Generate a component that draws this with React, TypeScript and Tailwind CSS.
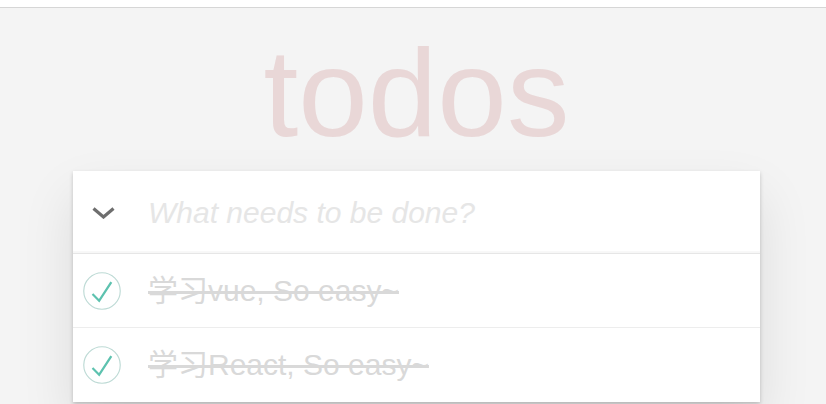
const todos = [
  { id: 1, title: "学习vue, So easy~", done: true },
  { id: 2, title: "学习React, So easy~", done: true },
];

const font = { fontFamily: '"Liberation Sans", "Noto Sans CJK SC", sans-serif' };

function CheckIcon() {
  return (
    <svg width="38" height="38" viewBox="0 0 100 100">
      <circle cx="50" cy="50" r="48" fill="none" stroke="#bddad5" strokeWidth="3" />
      <path d="M72 25L42 71 27 56l-4 4 20 20 34-52z" fill="#5dc2af" />
    </svg>
  );
}

export default function App() {
  return (
    <div className="min-h-[404px] bg-[#f4f4f4]" style={font}>
      <div className="h-[8px] bg-white border-b border-[#d6d6d6]" />
      <div className="ml-[73px] w-[687px]">
        <h1 className="mt-[22px] mb-[16px] text-center text-[125px] leading-[125px] text-[#e9d7d7] font-normal">
          todos
        </h1>

        <div className="bg-white shadow-[0_2px_4px_0_rgba(0,0,0,0.2),0_25px_50px_0_rgba(0,0,0,0.1)]">
          {/* new todo input */}
          <div className="flex h-[82px] items-center shadow-[inset_0_-2px_1px_rgba(0,0,0,0.03)]">
            <div className="flex w-[75px] justify-start pl-[19px]">
              <svg width="23" height="12" viewBox="0 0 23 12" className="mt-[2px]">
                <polyline points="1.5,1.5 11.5,10 21.5,1.5" fill="none" stroke="#6e6e6e" strokeWidth="3.2" />
              </svg>
            </div>
            <input
              className="flex-1 bg-transparent pr-[20px] text-[30px] italic text-[#4d4d4d] outline-none placeholder:text-[#e6e6e6]"
              style={font}
              placeholder="What needs to be done?"
            />
          </div>

          {/* list */}
          <ul className="border-t border-[#e6e6e6]">
            {todos.map((todo, i) => (
              <li
                key={todo.id}
                className={`flex h-[74px] items-center ${i < todos.length - 1 ? "border-b border-[#ededed]" : ""}`}
              >
                <div className="flex w-[75px] justify-start pl-[10px]">
                  <CheckIcon />
                </div>
                <span className="text-[30px] leading-[36px] text-[#d9d9d9] line-through">
                  {todo.title}
                </span>
              </li>
            ))}
          </ul>
        </div>
      </div>
    </div>
  );
}
